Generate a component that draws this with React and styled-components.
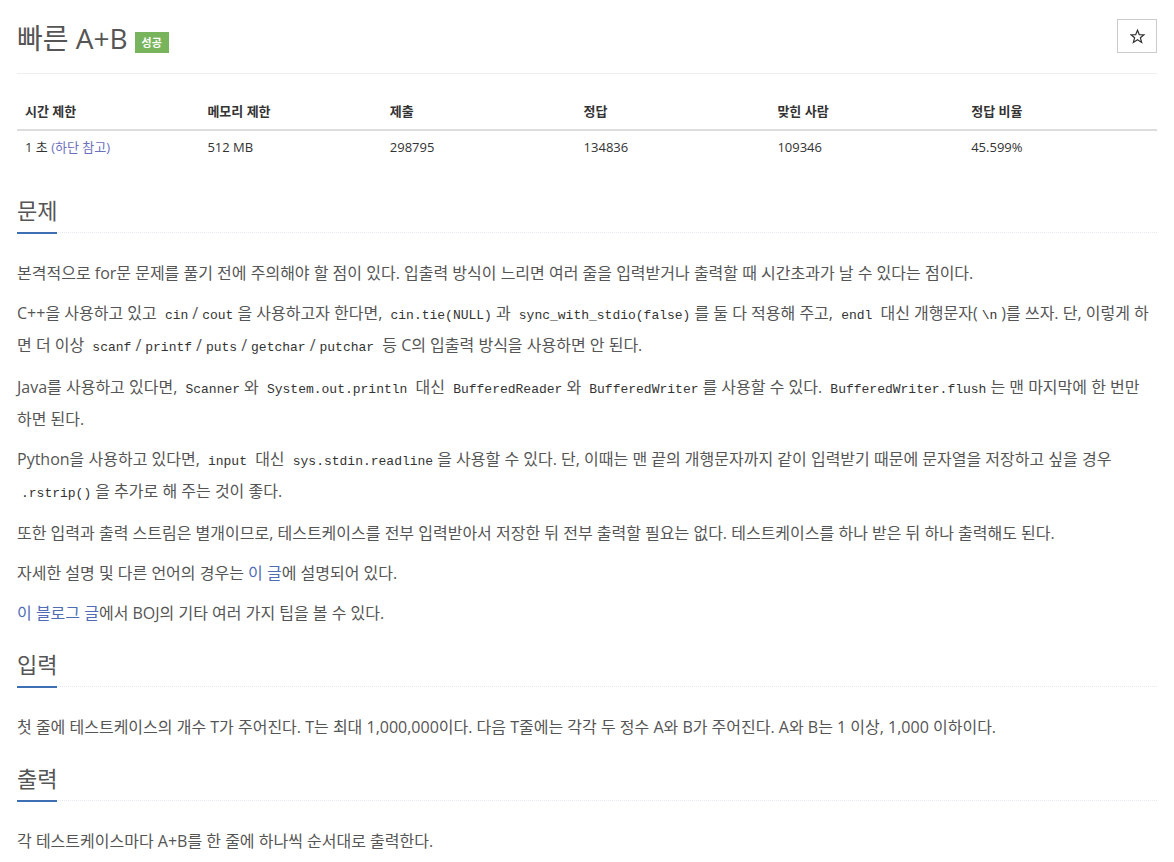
import React from "react";
import styled, { createGlobalStyle } from "styled-components";

const Global = createGlobalStyle`
  html, body { margin: 0; padding: 0; background: #fff; }
  body {
    font-family: "Open Sans", "Noto Sans CJK KR", sans-serif;
    color: #555;
    font-size: 13px;
  }
  * { box-sizing: border-box; }
`;

const Page = styled.div`
  padding: 0 17px;
`;

const Header = styled.div`
  display: flex;
  justify-content: space-between;
  align-items: flex-start;
  padding: 20px 0 17px;
  border-bottom: 1px solid #eee;
  margin-bottom: 20px;
`;

const Title = styled.h1`
  margin: 0;
  font-size: 28px;
  line-height: 36px;
  font-weight: 400;
  color: #555;
  display: flex;
  align-items: center;
  gap: 7px;
`;

const Label = styled.span`
  display: inline-block;
  background: #78b45c;
  color: #fff;
  font-size: 11px;
  font-weight: 700;
  line-height: 15px;
  padding: 3px 7px;
  margin-top: 8px;
`;

const StarButton = styled.button`
  width: 40px;
  height: 34px;
  margin-top: -1px;
  border: 1px solid #ccc;
  background: #fff;
  padding: 0;
  display: flex;
  align-items: center;
  justify-content: center;
`;

const Table = styled.table`
  width: 100%;
  border-collapse: collapse;
  margin-bottom: 20px;
  table-layout: fixed;
`;

const Th = styled.th`
  text-align: left;
  padding: 8px;
  font-size: 13px;
  line-height: 18.57px;
  font-weight: 700;
  color: #333;
  border-bottom: 2px solid #ddd;
  width: ${(p) => p.$w};
`;

const Td = styled.td`
  padding: 7px 8px 8px;
  font-size: 13px;
  line-height: 18.57px;
  color: #333;
`;

const Link = styled.a`
  color: ${(p) => (p.$soft ? "#6b6fc0" : "#4f6db5")};
  text-decoration: none;
`;

const Section = styled.section`
  display: flow-root;
`;

const Headline = styled.div`
  margin: 10px 0 25px;
  border-bottom: 1px dotted #e4e9f0;
`;

const H2 = styled.h2`
  display: inline-block;
  margin: 0 0 -2px;
  padding-bottom: 5px;
  font-size: 22px;
  line-height: 33px;
  font-weight: 400;
  color: #555;
  border-bottom: 2px solid #3f6eb5;
`;

const P = styled.p`
  margin: 0 0 10px;
  font-size: 16px;
  line-height: 30px;
  color: #555;
`;

const Code = styled.code`
  font-family: "Liberation Mono", "DejaVu Sans Mono", monospace;
  font-size: 13px;
  line-height: 28px;
  color: #333;
  padding: 2px 4px;
`;

const cols = ["16%", "16%", "17%", "17%", "17%", "17%"];
const heads = ["시간 제한", "메모리 제한", "제출", "정답", "맞힌 사람", "정답 비율"];

function Heading({ children }) {
  return (
    <Headline>
      <H2>{children}</H2>
    </Headline>
  );
}

function StarIcon() {
  return (
    <svg width="15" height="15" viewBox="0 0 24 24" fill="none" stroke="#333" strokeWidth="2" strokeLinejoin="miter">
      <polygon points="12,2 14.9,9 22.5,9.3 16.6,14.1 18.6,21.5 12,17.3 5.4,21.5 7.4,14.1 1.5,9.3 9.1,9" />
    </svg>
  );
}

export default function App() {
  return (
    <Page>
      <Global />
      <Header>
        <Title>
          빠른 A+B <Label>성공</Label>
        </Title>
        <StarButton aria-label="즐겨찾기">
          <StarIcon />
        </StarButton>
      </Header>

      <Table>
        <thead>
          <tr>
            {heads.map((h, i) => (
              <Th key={h} $w={cols[i]}>
                {h}
              </Th>
            ))}
          </tr>
        </thead>
        <tbody>
          <tr>
            <Td>
              1 초 <Link $soft>(하단 참고)</Link>
            </Td>
            <Td>512 MB</Td>
            <Td>298795</Td>
            <Td>134836</Td>
            <Td>109346</Td>
            <Td>45.599%</Td>
          </tr>
        </tbody>
      </Table>

      <Section>
        <Heading>문제</Heading>
        <P>
          본격적으로 for문 문제를 풀기 전에 주의해야 할 점이 있다. 입출력 방식이 느리면 여러 줄을 입력받거나 출력할 때
          시간초과가 날 수 있다는 점이다.
        </P>
        <P>
          C++을 사용하고 있고 <Code>cin</Code>/<Code>cout</Code>을 사용하고자 한다면, <Code>cin.tie(NULL)</Code>과{" "}
          <Code>sync_with_stdio(false)</Code>를 둘 다 적용해 주고, <Code>endl</Code> 대신 개행문자(<Code>\n</Code>)를
          쓰자. 단, 이렇게 하면 더 이상 <Code>scanf</Code>/<Code>printf</Code>/<Code>puts</Code>/<Code>getchar</Code>/
          <Code>putchar</Code> 등 C의 입출력 방식을 사용하면 안 된다.
        </P>
        <P>
          Java를 사용하고 있다면, <Code>Scanner</Code>와 <Code>System.out.println</Code> 대신{" "}
          <Code>BufferedReader</Code>와 <Code>BufferedWriter</Code>를 사용할 수 있다.{" "}
          <Code>BufferedWriter.flush</Code>는 맨 마지막에 한 번만 하면 된다.
        </P>
        <P>
          Python을 사용하고 있다면, <Code>input</Code> 대신 <Code>sys.stdin.readline</Code>을 사용할 수 있다. 단, 이때는 맨
          끝의 개행문자까지 같이 입력받기 때문에 문자열을 저장하고 싶을 경우 <Code>.rstrip()</Code>을 추가로 해 주는 것이
          좋다.
        </P>
        <P>
          또한 입력과 출력 스트림은 별개이므로, 테스트케이스를 전부 입력받아서 저장한 뒤 전부 출력할 필요는 없다.
          테스트케이스를 하나 받은 뒤 하나 출력해도 된다.
        </P>
        <P>
          자세한 설명 및 다른 언어의 경우는 <Link>이 글</Link>에 설명되어 있다.
        </P>
        <P>
          <Link>이 블로그 글</Link>에서 BOJ의 기타 여러 가지 팁을 볼 수 있다.
        </P>
      </Section>

      <Section>
        <Heading>입력</Heading>
        <P>
          첫 줄에 테스트케이스의 개수 T가 주어진다. T는 최대 1,000,000이다. 다음 T줄에는 각각 두 정수 A와 B가 주어진다.
          A와 B는 1 이상, 1,000 이하이다.
        </P>
      </Section>

      <Section>
        <Heading>출력</Heading>
        <P>각 테스트케이스마다 A+B를 한 줄에 하나씩 순서대로 출력한다.</P>
      </Section>
    </Page>
  );
}
